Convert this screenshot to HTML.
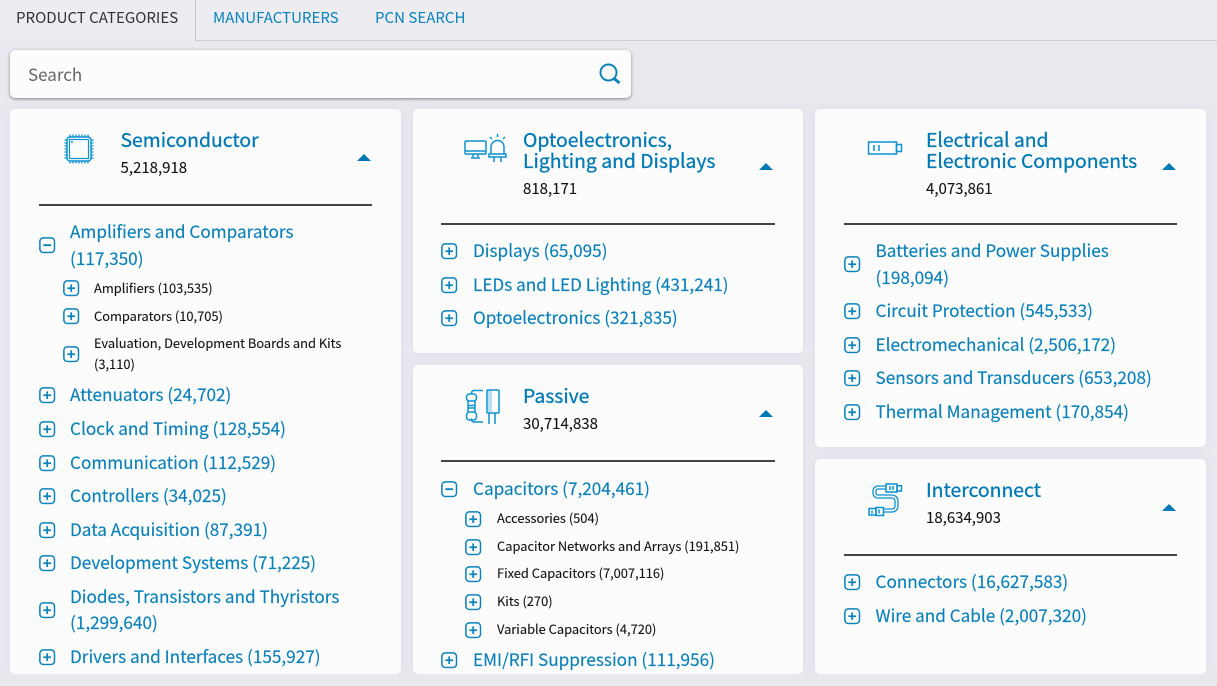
<!DOCTYPE html>
<html><head><meta charset="utf-8"><title>Product Categories</title>
<style>
html,body{margin:0;padding:0;width:1217px;height:686px;overflow:hidden;background:#e9e9f0}
body{position:relative;font-family:"Noto Sans CJK JP","Liberation Sans",sans-serif}
.t{position:absolute;white-space:nowrap;line-height:24px;height:24px}
.l{font-size:17.17px;color:#0a80b8;-webkit-text-stroke:.15px #0a80b8;margin-top:-1px}
.s{font-size:12.87px;color:#111;-webkit-text-stroke:.1px #111}
.h{font-size:19.37px;color:#0079b5;-webkit-text-stroke:.3px #0079b5}
.c{font-size:15px;color:#111;-webkit-text-stroke:.1px #111}
.tab{font-size:15.05px;margin-top:1px}
.card{position:absolute;background:#fcfcfc;border-radius:5px;box-shadow:0 0 8px rgba(200,200,215,.35)}
.hr{position:absolute;height:2px;width:333px;background:#444}
.tri{position:absolute;width:0;height:0;border-left:7.5px solid transparent;border-right:7.5px solid transparent;border-bottom:7px solid #0079b5;margin-left:.5px}
svg{position:absolute;overflow:visible}
.i{width:16.4px;height:16.4px;margin-top:.5px}
.ic{fill:none;stroke:#0c92cf;stroke-width:1.5}
</style></head><body>
<svg width="0" height="0" style="position:absolute"><defs>
<symbol id="p" viewBox="0 0 17 17"><rect x=".9" y=".9" width="15.2" height="15.2" rx="3.6" fill="none" stroke="#0a82ba" stroke-width="1.6"/><path d="M4.5 8.5h8M8.5 4.5v8" stroke="#0a82ba" stroke-width="1.8" fill="none"/></symbol>
<symbol id="m" viewBox="0 0 17 17"><rect x=".9" y=".9" width="15.2" height="15.2" rx="3.6" fill="none" stroke="#0a82ba" stroke-width="1.6"/><path d="M4.5 8.5h8" stroke="#0a82ba" stroke-width="1.9" fill="none"/></symbol>
</defs></svg>

<div style="position:absolute;left:0;top:0;width:1217px;height:40px;background:#ececf1"></div>
<div style="position:absolute;left:0;top:40px;width:1217px;height:1px;background:#cfcfd3"></div>
<div style="position:absolute;left:0;top:0;width:195px;height:41px;background:#ececf1;border-right:1px solid #c9c9cd"></div>
<div class="t tab" style="left:16px;top:5px;color:#333">PRODUCT CATEGORIES</div>
<div class="t tab" style="left:213px;top:5px;color:#0a82ba">MANUFACTURERS</div>
<div class="t tab" style="left:375px;top:5px;color:#0a82ba">PCN SEARCH</div>

<div style="position:absolute;left:10px;top:50px;width:621px;height:48px;background:#fcfcfc;border-radius:5px;box-shadow:0 1px 3px rgba(0,0,0,.45)"></div>
<div class="t" style="left:28px;top:62px;font-size:17px;color:#666">Search</div>
<svg style="left:598px;top:63px" width="24" height="22" viewBox="0 0 24 22"><circle cx="10.5" cy="9.5" r="8" fill="none" stroke="#0a82ba" stroke-width="1.9"/><path d="M16 15.5l5.5 4.5" stroke="#0a82ba" stroke-width="3" fill="none"/></svg>

<div class="card" style="left:10px;top:109px;width:391px;height:565px"></div>
<div class="card" style="left:413px;top:109px;width:390px;height:244px"></div>
<div class="card" style="left:413px;top:365px;width:390px;height:309px"></div>
<div class="card" style="left:815px;top:109px;width:391px;height:338px"></div>
<div class="card" style="left:815px;top:459px;width:391px;height:215px"></div>

<!-- Semiconductor -->
<svg style="left:64px;top:134px" width="30" height="30" viewBox="0 0 30 30"><rect x="3" y="3" width="24" height="24" rx="3" class="ic"/><rect x="5.500" y="5.500" width="19" height="19" fill="none" stroke="#0c92cf" stroke-width="1.2"/><circle cx="8" cy="8" r="1" fill="#0c92cf"/><path d="M6 .5v3M9 .5v3M12 .5v3M15 .5v3M18 .5v3M21 .5v3M24 .5v3M6 26.500v3M9 26.500v3M12 26.500v3M15 26.500v3M18 26.500v3M21 26.500v3M24 26.500v3M.5 6h3M.5 9h3M.5 12h3M.5 15h3M.5 18h3M.5 21h3M.5 24h3M26.500 6h3M26.500 9h3M26.500 12h3M26.500 15h3M26.500 18h3M26.500 21h3M26.500 24h3" stroke="#0c92cf" stroke-width="1.3" fill="none"/></svg>
<div class="t h" style="left:120.500px;top:127px">Semiconductor</div>
<div class="t c" style="left:120.500px;top:156px">5,218,918</div>
<div class="tri" style="left:356px;top:154px"></div>
<div class="hr" style="left:39px;top:204px"></div>

<svg class="i" style="left:39px;top:236px"><use href="#m"/></svg>
<div class="t l" style="left:70px;top:220px">Amplifiers and Comparators</div>
<div class="t l" style="left:70px;top:247px">(117,350)</div>
<svg class="i" style="left:63px;top:279px"><use href="#p"/></svg>
<div class="t s" style="left:94px;top:276px">Amplifiers (103,535)</div>
<svg class="i" style="left:63px;top:307px"><use href="#p"/></svg>
<div class="t s" style="left:94px;top:304px">Comparators (10,705)</div>
<svg class="i" style="left:63px;top:345px"><use href="#p"/></svg>
<div class="t s" style="left:94px;top:331px">Evaluation, Development Boards and Kits</div>
<div class="t s" style="left:94px;top:352px">(3,110)</div>
<svg class="i" style="left:39px;top:386px"><use href="#p"/></svg>
<div class="t l" style="left:70px;top:383px">Attenuators (24,702)</div>
<svg class="i" style="left:39px;top:420px"><use href="#p"/></svg>
<div class="t l" style="left:70px;top:417px">Clock and Timing (128,554)</div>
<svg class="i" style="left:39px;top:454px"><use href="#p"/></svg>
<div class="t l" style="left:70px;top:451px">Communication (112,529)</div>
<svg class="i" style="left:39px;top:487px"><use href="#p"/></svg>
<div class="t l" style="left:70px;top:484px">Controllers (34,025)</div>
<svg class="i" style="left:39px;top:521px"><use href="#p"/></svg>
<div class="t l" style="left:70px;top:518px">Data Acquisition (87,391)</div>
<svg class="i" style="left:39px;top:554px"><use href="#p"/></svg>
<div class="t l" style="left:70px;top:551px">Development Systems (71,225)</div>
<svg class="i" style="left:39px;top:601px"><use href="#p"/></svg>
<div class="t l" style="left:70px;top:585px">Diodes, Transistors and Thyristors</div>
<div class="t l" style="left:70px;top:611px">(1,299,640)</div>
<svg class="i" style="left:39px;top:648px"><use href="#p"/></svg>
<div class="t l" style="left:70px;top:645px">Drivers and Interfaces (155,927)</div>

<!-- Opto -->
<svg style="left:464px;top:134px" width="44" height="28" viewBox="0 0 44 28"><rect x="1" y="7" width="21" height="13" rx="1" class="ic"/><path d="M1 17h21M9 20v3M14 20v3M7 24h9" class="ic"/><path d="M27 20v-7a6.5 6.500 0 0 1 13 0v7M25 20h17v3H25zM30 23v5M37 23v5M33.500 0v3M26 3l2 2M41 3l-2 2" class="ic"/></svg>
<div class="t h" style="left:523px;top:127px">Optoelectronics,</div>
<div class="t h" style="left:523px;top:148px">Lighting and Displays</div>
<div class="t c" style="left:523px;top:177px">818,171</div>
<div class="tri" style="left:758px;top:163px"></div>
<div class="hr" style="left:441px;top:223px;width:334px"></div>
<svg class="i" style="left:441px;top:242px"><use href="#p"/></svg>
<div class="t l" style="left:473px;top:239px">Displays (65,095)</div>
<svg class="i" style="left:441px;top:276px"><use href="#p"/></svg>
<div class="t l" style="left:473px;top:273px">LEDs and LED Lighting (431,241)</div>
<svg class="i" style="left:441px;top:309px"><use href="#p"/></svg>
<div class="t l" style="left:473px;top:306px">Optoelectronics (321,835)</div>

<!-- Passive -->
<svg style="left:464px;top:388px" width="38" height="36" viewBox="0 0 38 36"><path d="M19 2.500H10a2.500 2.500 0 0 0-2.500 2.500v1M19 34H10a2.500 2.500 0 0 1-2.500-2.500v-1" class="ic"/><rect x="2.500" y="6" width="10" height="7" rx="3" class="ic"/><rect x="2.500" y="24" width="10" height="8" rx="3" class="ic"/><path d="M4 13v11M11 13v11M4 17.500h7M4 20h7" class="ic"/><rect x="23" y="2" width="12" height="23" rx="1" class="ic"/><rect x="24" y="3" width="4" height="21" fill="#b9e0f2"/><path d="M25 25v11M31 25v11" class="ic"/></svg>
<div class="t h" style="left:523px;top:383px">Passive</div>
<div class="t c" style="left:523px;top:412px">30,714,838</div>
<div class="tri" style="left:758px;top:410px"></div>
<div class="hr" style="left:441px;top:460px;width:334px"></div>
<svg class="i" style="left:441px;top:480px"><use href="#m"/></svg>
<div class="t l" style="left:473px;top:477px">Capacitors (7,204,461)</div>
<svg class="i" style="left:465px;top:510px"><use href="#p"/></svg>
<div class="t s" style="left:497px;top:506px">Accessories (504)</div>
<svg class="i" style="left:465px;top:538px"><use href="#p"/></svg>
<div class="t s" style="left:497px;top:534px">Capacitor Networks and Arrays (191,851)</div>
<svg class="i" style="left:465px;top:565px"><use href="#p"/></svg>
<div class="t s" style="left:497px;top:561px">Fixed Capacitors (7,007,116)</div>
<svg class="i" style="left:465px;top:593px"><use href="#p"/></svg>
<div class="t s" style="left:497px;top:589px">Kits (270)</div>
<svg class="i" style="left:465px;top:621px"><use href="#p"/></svg>
<div class="t s" style="left:497px;top:617px">Variable Capacitors (4,720)</div>
<svg class="i" style="left:441px;top:651px"><use href="#p"/></svg>
<div class="t l" style="left:473px;top:648px">EMI/RFI Suppression (111,956)</div>

<!-- Electrical -->
<svg style="left:867px;top:140px" width="36" height="16" viewBox="0 0 36 16"><rect x="1.500" y="2" width="28" height="12" class="ic"/><rect x="29.500" y="4.500" width="5" height="7" class="ic"/><path d="M7 5v6M12 5v6" class="ic"/></svg>
<div class="t h" style="left:926px;top:127px">Electrical and</div>
<div class="t h" style="left:926px;top:148px">Electronic Components</div>
<div class="t c" style="left:926px;top:177px">4,073,861</div>
<div class="tri" style="left:1161px;top:163px"></div>
<div class="hr" style="left:844px;top:223px"></div>
<svg class="i" style="left:844px;top:255px"><use href="#p"/></svg>
<div class="t l" style="left:875.500px;top:239px">Batteries and Power Supplies</div>
<div class="t l" style="left:875.500px;top:266px">(198,094)</div>
<svg class="i" style="left:844px;top:302px"><use href="#p"/></svg>
<div class="t l" style="left:875.500px;top:299px">Circuit Protection (545,533)</div>
<svg class="i" style="left:844px;top:336px"><use href="#p"/></svg>
<div class="t l" style="left:875.500px;top:333px">Electromechanical (2,506,172)</div>
<svg class="i" style="left:844px;top:369px"><use href="#p"/></svg>
<div class="t l" style="left:875.500px;top:366px">Sensors and Transducers (653,208)</div>
<svg class="i" style="left:844px;top:403px"><use href="#p"/></svg>
<div class="t l" style="left:875.500px;top:400px">Thermal Management (170,854)</div>

<!-- Interconnect -->
<svg style="left:868px;top:483px" width="34" height="34" viewBox="0 0 34 34"><path d="M18 3H10a5 5 0 0 0-5 5v2a5 5 0 0 0 5 5H24a3 3 0 0 1 3 3v5a3 3 0 0 1-3 3H15" fill="none" stroke="#0c92cf" stroke-width="1.300"/><path d="M18 6H10a2 2 0 0 0-2 2v2a2 2 0 0 0 2 2H24a6 6 0 0 1 6 6v5a6 6 0 0 1-6 6H15" fill="none" stroke="#0c92cf" stroke-width="1.300"/><rect x="18" y="1" width="11" height="8" class="ic"/><rect x="29" y="2.700" width="4.500" height="5.300" class="ic"/><path d="M22 3v4M25 3v4" class="ic"/><rect x="8" y="24.500" width="7.500" height="8" class="ic"/><rect x="1" y="25.500" width="7" height="6.500" class="ic"/><path d="M11 26.500v4M4 27.500v3" class="ic"/></svg>
<div class="t h" style="left:926px;top:477px">Interconnect</div>
<div class="t c" style="left:926px;top:506px">18,634,903</div>
<div class="tri" style="left:1161px;top:504px"></div>
<div class="hr" style="left:844px;top:554px"></div>
<svg class="i" style="left:844px;top:573px"><use href="#p"/></svg>
<div class="t l" style="left:875.500px;top:570px">Connectors (16,627,583)</div>
<svg class="i" style="left:844px;top:607px"><use href="#p"/></svg>
<div class="t l" style="left:875.500px;top:604px">Wire and Cable (2,007,320)</div>

<div style="position:absolute;left:0;top:674px;width:1217px;height:12px;background:#e8e8ee"></div>
</body></html>
